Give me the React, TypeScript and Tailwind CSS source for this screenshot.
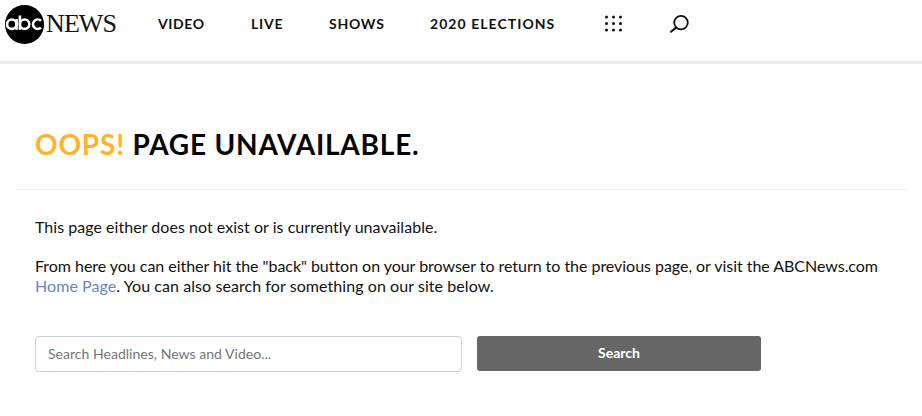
export default function App() {
  const nav = [
    { label: "VIDEO", cls: "w-[93px] tracking-[0.6px]" },
    { label: "LIVE", cls: "w-[78px] tracking-[0.75px]" },
    { label: "SHOWS", cls: "w-[101px] tracking-[0.75px]" },
    { label: "2020 ELECTIONS", cls: "w-[175px] tracking-[1.05px]" },
  ];
  return (
    <div className="w-[922px] h-[416px] overflow-hidden bg-white text-[#0a0a0a] font-['Lato','Open_Sans',sans-serif]">
      <header className="h-[64px] border-b-[3px] border-[#ebebeb] flex items-start">
        <div className="flex items-center ml-[5px] mt-[5px] w-[153px]">
          <svg width="39" height="39" viewBox="0 0 39 39" className="shrink-0">
            <circle cx="19.5" cy="19.5" r="19.5" fill="#000" />
            <g fill="none" stroke="#fff" strokeWidth="2.6">
              <circle cx="6.8" cy="19.2" r="4.7" />
              <path d="M11.6 14V24.8" />
              <circle cx="19.6" cy="19.2" r="4.7" />
              <path d="M14.9 10.5V24.8" />
              <path d="M36 15.8a4.7 4.7 0 1 0 0 6.8" />
            </g>
          </svg>
          <span className="font-['Liberation_Serif',serif] text-[26px] leading-none tracking-[-0.9px] text-[#111] ml-[2px] mt-[-1px]">NEWS</span>
        </div>
        <nav className="flex items-center h-[47px]">
          {nav.map((n) => (
            <span key={n.label} className={`${n.cls} text-[14px] font-bold text-[#111] whitespace-nowrap`}>
              {n.label}
            </span>
          ))}
          <svg width="18" height="18" viewBox="0 0 18 18" className="shrink-0">
            <g fill="#111">
              {[2, 8.6, 15].flatMap((y) =>
                [1.5, 8.5, 15.5].map((x) => <circle key={`${x}-${y}`} cx={x} cy={y} r="1.5" />)
              )}
            </g>
          </svg>
          <svg width="22" height="22" viewBox="0 0 22 22" className="shrink-0 ml-[46px]">
            <circle cx="12" cy="9.6" r="6.8" fill="none" stroke="#111" strokeWidth="1.8" />
            <path d="M7.2 14.6L2 18.8" fill="none" stroke="#111" strokeWidth="2" strokeLinecap="round" />
          </svg>
        </nav>
      </header>

      <main className="px-4">
        <div className="border-b border-[#f0f0f0] w-[892px] h-[126px] px-[19px] pt-[63px]">
          <h1 className="text-[28px] leading-[34px] font-bold tracking-[0.8px] whitespace-nowrap">
            <span className="text-[#fdb32a]">OOPS!</span> <span className="text-[#050505]">PAGE UNAVAILABLE.</span>
          </h1>
        </div>
        <div className="px-[19px] pt-[27px] text-[16px] leading-[20px] text-[#111]">
          <p className="tracking-[0.035px]">This page either does not exist or is currently unavailable.</p>
          <p className="mt-[19px] w-[860px]">
            <span className="tracking-[-0.035px]">
              From here you can either hit the "back" button on your browser to return to the previous page, or visit the ABCNews.com
            </span>{" "}
            <span className="tracking-[0.07px]">
              <span className="text-[#6786c1]">Home Page</span>. You can also search for something on our site below.
            </span>
          </p>
          <div className="flex items-start mt-[40px]">
            <input
              readOnly
              placeholder="Search Headlines, News and Video..."
              className="w-[427px] h-[36px] rounded-[4px] border border-[#c9d0da] bg-white px-3 pb-[2px] text-[14px] tracking-[0.03px] outline-none placeholder:text-[#757575]"
            />
            <button className="ml-[15px] w-[284px] h-[35px] pb-[2px] rounded-[3px] bg-[#666666] text-white text-[14px] font-bold">Search</button>
          </div>
        </div>
      </main>
    </div>
  );
}
